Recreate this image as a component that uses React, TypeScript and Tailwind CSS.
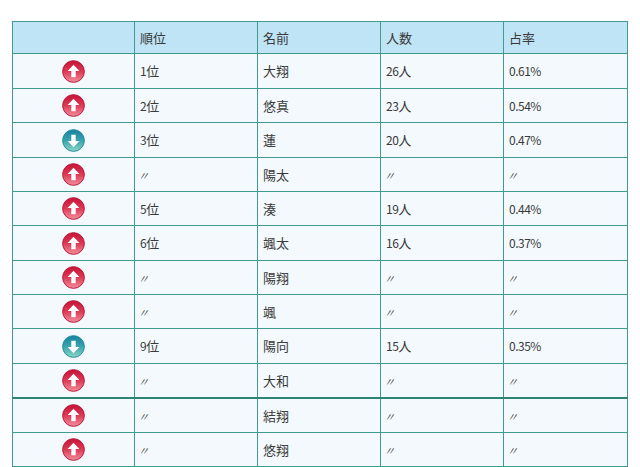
import React from "react"

type Row = {
  up: boolean
  rank: string
  name: string
  count: string
  rate: string
  h: number
  thick?: boolean
}

const rows: Row[] = [
  { up: true, rank: "1位", name: "大翔", count: "26人", rate: "0.61%", h: 35 },
  { up: true, rank: "2位", name: "悠真", count: "23人", rate: "0.54%", h: 34 },
  { up: false, rank: "3位", name: "蓮", count: "20人", rate: "0.47%", h: 35 },
  { up: true, rank: "〃", name: "陽太", count: "〃", rate: "〃", h: 34 },
  { up: true, rank: "5位", name: "湊", count: "19人", rate: "0.44%", h: 34 },
  { up: true, rank: "6位", name: "颯太", count: "16人", rate: "0.37%", h: 35 },
  { up: true, rank: "〃", name: "陽翔", count: "〃", rate: "〃", h: 34 },
  { up: true, rank: "〃", name: "颯", count: "〃", rate: "〃", h: 34 },
  { up: false, rank: "9位", name: "陽向", count: "15人", rate: "0.35%", h: 35 },
  { up: true, rank: "〃", name: "大和", count: "〃", rate: "〃", h: 34, thick: true },
  { up: true, rank: "〃", name: "結翔", count: "〃", rate: "〃", h: 35 },
  { up: true, rank: "〃", name: "悠翔", count: "〃", rate: "〃", h: 34 },
]

function TrendIcon({ up }: { up: boolean }) {
  const id = up ? "gUp" : "gDown"
  return (
    <svg width="23" height="23" viewBox="0 0 22 22" className="mx-auto block">
      <defs>
        <linearGradient id={id} x1="0" y1="0" x2="0" y2="1">
          {up ? (
            <>
              <stop offset="0" stopColor="#c81237" />
              <stop offset="0.5" stopColor="#dc3a55" />
              <stop offset="1" stopColor="#f4909c" />
            </>
          ) : (
            <>
              <stop offset="0" stopColor="#16849f" />
              <stop offset="0.5" stopColor="#3aa3ad" />
              <stop offset="1" stopColor="#8ad8c4" />
            </>
          )}
        </linearGradient>
      </defs>
      <circle cx="11" cy="11" r="10.4" fill={`url(#${id})`} stroke={up ? "#b5183a" : "#1f8a9a"} strokeWidth="0.9" />
      {up ? (
        <polygon points="11,4.6 16.6,10.6 13.1,10.6 13.1,16.6 8.9,16.6 8.9,10.6 5.4,10.6" fill="#fff" />
      ) : (
        <polygon points="11,17.4 16.6,11.4 13.1,11.4 13.1,5.4 8.9,5.4 8.9,11.4 5.4,11.4" fill="#fff" />
      )}
    </svg>
  )
}

// digits are narrow in the original, kanji keep full size
function Value({ v }: { v: string }) {
  if (v === "〃") return <span className="-ml-[2px] text-[11px] italic">〃</span>
  const m = v.match(/^([\d.%]+)(.*)$/)
  if (!m) return <>{v}</>
  return (
    <>
      <span className="text-[12px] tracking-[-0.5px]">{m[1]}</span>
      {m[2]}
    </>
  )
}

export default function App() {
  const cell = "border border-[#3f9a8f] px-[5px] align-middle"

  return (
    <div className="min-h-screen bg-white pt-[21px] pl-[12px] text-[13px] text-[#3a3a3a] font-['Noto_Sans_CJK_JP','Noto_Sans',sans-serif]">
      <table className="border-collapse table-fixed w-[616px]">
        <colgroup>
          <col className="w-[122px]" />
          <col className="w-[123px]" />
          <col className="w-[123px]" />
          <col className="w-[123px]" />
          <col className="w-[124px]" />
        </colgroup>
        <thead>
          <tr className="h-[32px] bg-[#bee4f6]">
            <th className={cell}></th>
            <th className={`${cell} text-left font-normal`}>順位</th>
            <th className={`${cell} text-left font-normal`}>名前</th>
            <th className={`${cell} text-left font-normal`}>人数</th>
            <th className={`${cell} text-left font-normal`}>占率</th>
          </tr>
        </thead>
        <tbody className="bg-[#f3f9fd]">
          {rows.map((r, i) => (
            <tr
              key={i}
              style={{ height: r.h }}
              className={r.thick ? "border-b-2 border-b-[#2e8577]" : ""}
            >
              <td className={cell}>
                <TrendIcon up={r.up} />
              </td>
              <td className={cell}>
                <Value v={r.rank} />
              </td>
              <td className={cell}>{r.name}</td>
              <td className={cell}>
                <Value v={r.count} />
              </td>
              <td className={cell}>
                <Value v={r.rate} />
              </td>
            </tr>
          ))}
        </tbody>
      </table>
    </div>
  )
}
